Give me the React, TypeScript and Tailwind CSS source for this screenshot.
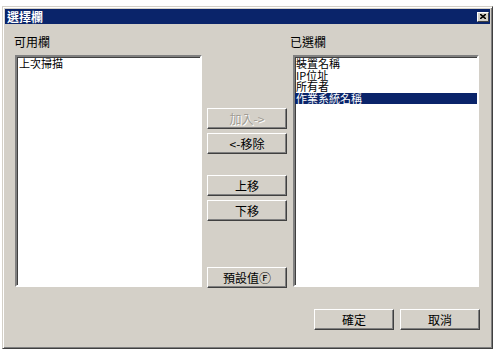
import React from "react";

const font = { fontFamily: '"Noto Sans CJK TC", "Noto Sans", sans-serif' };

function ClassicButton({
  label,
  disabled = false,
}: {
  label: string;
  disabled?: boolean;
}) {
  return (
    <button
      type="button"
      disabled={disabled}
      className={
        "flex h-[21px] w-[80px] items-center justify-center border border-t-white border-l-white border-r-[#404040] border-b-[#404040] bg-[#d4d0c8] text-[12px] leading-none shadow-[inset_-1px_-1px_#808080] " +
        (disabled
          ? "text-[#a09c94] [text-shadow:1px_1px_0_#ffffff]"
          : "text-black")
      }
    >
      {label}
    </button>
  );
}

function ListBox({
  items,
  selected,
  padLeft,
}: {
  items: string[];
  selected?: number;
  padLeft: string;
}) {
  return (
    <div className="h-[232px] border-2 border-t-[#808080] border-l-[#808080] border-r-white border-b-white bg-white shadow-[inset_1px_1px_#404040]">
      <ul className="pt-[1px] text-[11px] leading-[11.6px] text-black">
        {items.map((item, i) => (
          <li
            key={item}
            className={
              "h-[11.6px] whitespace-nowrap " +
              padLeft +
              (i === selected ? " bg-[#0a246a] text-white" : "")
            }
          >
            {item}
          </li>
        ))}
      </ul>
    </div>
  );
}

export default function App() {
  return (
    <div className="h-[352px] w-[497px] overflow-hidden bg-white" style={font}>
      <div className="ml-[2px] mt-[6px] flex h-[343px] w-[491px] flex-col border border-t-[#d4d0c8] border-l-[#d4d0c8] border-r-[#404040] border-b-[#404040] bg-[#d4d0c8] p-[2px] shadow-[inset_1px_1px_#ffffff,inset_-1px_-1px_#808080]">
        {/* title bar */}
        <div className="flex h-[15px] shrink-0 items-center justify-between bg-[#0a246a] pl-[2px] pr-[1px]">
          <span className="text-[12px] font-bold leading-none text-white">
            選擇欄
          </span>
          <span className="flex h-[10px] w-[12px] items-center justify-center border border-t-white border-l-white border-r-[#404040] border-b-[#404040] bg-[#d4d0c8]">
            <svg width="6" height="5" viewBox="0 0 6 5">
              <path d="M0 0 L6 5 M6 0 L0 5" stroke="#000" strokeWidth="1.6" />
            </svg>
          </span>
        </div>

        {/* body */}
        <div className="flex flex-1 flex-col pl-[10px] pt-[11px]">
          <div className="flex gap-[5px]">
            <div className="flex w-[187px] flex-col">
              <span className="-ml-[1px] h-[14px] text-[12px] leading-[14px] text-black">
                可用欄
              </span>
              <div className="mt-[6px]">
                <ListBox items={["上次掃描"]} padLeft="pl-[2px]" />
              </div>
            </div>

            <div className="flex flex-col pt-[73px]">
              <ClassicButton label="加入->" disabled />
              <div className="mt-[4px]">
                <ClassicButton label="<-移除" />
              </div>
              <div className="mt-[21px]">
                <ClassicButton label="上移" />
              </div>
              <div className="mt-[4px]">
                <ClassicButton label="下移" />
              </div>
              <div className="mt-[46px]">
                <ClassicButton label="預設值Ⓕ" />
              </div>
            </div>

            <div className="ml-[1px] flex w-[186px] flex-col">
              <span className="-ml-[3px] h-[14px] text-[12px] leading-[14px] text-black">
                已選欄
              </span>
              <div className="mt-[6px]">
                <ListBox
                  items={["裝置名稱", "IP位址", "所有者", "作業系統名稱"]}
                  selected={3}
                  padLeft="pl-[1px]"
                />
              </div>
            </div>
          </div>

          <div className="mt-[21px] flex justify-end gap-[6px] pr-[10px]">
            <ClassicButton label="確定" />
            <ClassicButton label="取消" />
          </div>
        </div>
      </div>
    </div>
  );
}
